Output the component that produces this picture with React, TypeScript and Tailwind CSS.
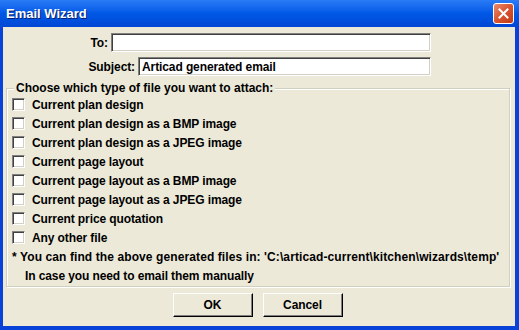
import React from 'react';

// Classic XP-style "Email Wizard" dialog

const attachOptions = [
    'Current plan design',
    'Current plan design as a BMP image',
    'Current plan design as a JPEG image',
    'Current page layout',
    'Current page layout as a BMP image',
    'Current page layout as a JPEG image',
    'Current price quotation',
    'Any other file',
];

const Checkbox = () => (
    <span className="w-[13px] h-[13px] shrink-0 bg-white border border-t-[#808080] border-l-[#808080] border-b-white border-r-white shadow-[inset_1px_1px_0_#404040,inset_-1px_-1px_0_#d4d0c8]" />
);

const TextField = ({ value, width }: { value?: string; width: string }) => (
    <div
        className={`${width} h-[19px] bg-white border border-t-[#808080] border-l-[#808080] border-b-white border-r-white shadow-[inset_1px_1px_0_#404040,inset_-1px_-1px_0_#d4d0c8] flex items-center pl-[3px] text-black`}
    >
        {value}
    </div>
);

const DialogButton = ({ label }: { label: string }) => (
    <button className="w-[80px] h-[24px] bg-[#ece9d8] border border-t-white border-l-white border-b-black border-r-black shadow-[inset_-1px_-1px_0_#808080] text-black">
        {label}
    </button>
);

export default function App() {
    return (
        <div className="w-[519px] h-[330px] flex flex-col bg-[#0842d8] font-['Liberation_Sans',Arial,sans-serif] text-[12px] font-bold tracking-[-0.1px] leading-[14px]">
            {/* title bar */}
            <div className="h-[27px] shrink-0 flex items-center justify-between pl-[6px] pr-[5px] bg-gradient-to-b from-[#2a7bf5] via-[#0058e6] to-[#0047d4]">
                <span className="text-white text-[13px] tracking-normal [text-shadow:1px_1px_0_#0a1e6e]">Email Wizard</span>
                <div className="w-[21px] h-[21px] rounded-[3px] border border-white bg-gradient-to-br from-[#e88a6b] via-[#d9532e] to-[#c23a17] flex items-center justify-center">
                    <svg width="11" height="11" viewBox="0 0 11 11">
                        <path d="M1.5 1.5 L9.5 9.5 M9.5 1.5 L1.5 9.5" stroke="white" strokeWidth="2" strokeLinecap="square" />
                    </svg>
                </div>
            </div>

            {/* body */}
            <div className="flex-1 ml-[3px] mr-[4px] mb-[4px] bg-[#ece9d8] flex flex-col text-black">
                <div className="mt-[6px] w-[428px] h-[19px] flex items-center justify-end gap-[3px]">
                    <span>To:</span>
                    <TextField width="w-[320px]" />
                </div>
                <div className="mt-[5px] w-[428px] h-[19px] flex items-center justify-end gap-[3px]">
                    <span>Subject:</span>
                    <TextField width="w-[293px]" value="Articad generated email" />
                </div>

                <fieldset className="mt-[5px] ml-[3px] mr-[5px] border border-[#d0d0bf] shadow-[inset_1px_1px_0_#fff,1px_1px_0_#fff] pb-[1px]">
                    <legend className="ml-[7px] px-[2px] bg-[#ece9d8] tracking-normal">Choose which type of file you want to attach:</legend>
                    {attachOptions.map((opt) => (
                        <div key={opt} className="h-[19px] flex items-center gap-[7px] pl-[5px]">
                            <Checkbox />
                            <span>{opt}</span>
                        </div>
                    ))}
                    <div className="h-[19px] flex items-center pl-[5px] tracking-[0.1px]">
                        * You can find the above generated files in: 'C:\articad-current\kitchen\wizards\temp'
                    </div>
                    <div className="h-[19px] flex items-center pl-[18px]">In case you need to email them manually</div>
                </fieldset>

                <div className="mt-[6px] flex justify-center gap-[10px] pr-[3px]">
                    <DialogButton label="OK" />
                    <DialogButton label="Cancel" />
                </div>
            </div>
        </div>
    );
}
